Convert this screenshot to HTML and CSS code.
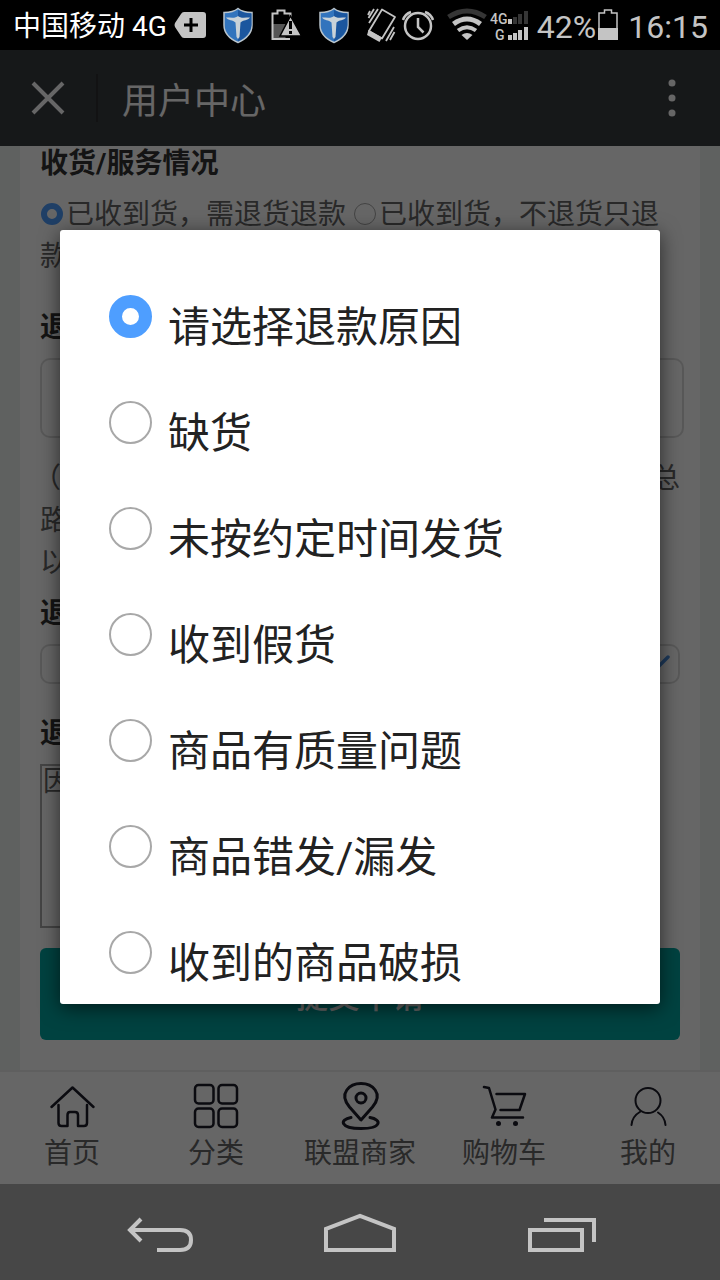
FILE: index.html
```html
<!DOCTYPE html>
<html lang="zh-CN">
<head>
<meta charset="utf-8">
<meta name="viewport" content="width=device-width, initial-scale=1">
<title>用户中心</title>
<link rel="stylesheet" href="styles.css">
</head>
<body>
<svg width="0" height="0" class="defs" aria-hidden="true">
  <symbol id="shield" viewBox="0 0 48 50">
    <path d="M24 8.500C21 11 15 12.500 10 12.500V25C10 33 16 39 24 42.500C32 39 38 33 38 25V12.500C33 12.500 27 11 24 8.500Z" fill="#3274bd" stroke="#b9c4cc" stroke-width="1.500"/>
    <path d="M24 10C28 12.500 33 13.500 37.500 13.500V25C37 32 31.500 38 24 41.500Z" fill="#1b569e"/>
    <path d="M12 17.500C17 17.500 22 18.500 24 16C26 18.500 31 17.500 36 17.500C34 20.500 29 20 26.500 22.500L25.500 37L24 39L22.500 37L21.500 22.500C19 20 14 20.500 12 17.500Z" fill="#c9d2d8"/>
  </symbol>
</svg>
<div class="screen">
  <div class="status">
    <span class="carrier">中国移动 4G</span>
    <svg class="ico-tag" viewBox="0 0 32 50"><path d="M10 12H29Q32 12 32 15V35Q32 38 29 38H10Q8 38 7 36L1 27Q0 25 1 23L7 14Q8 12 10 12Z" fill="#c4c4c4"/><path d="M17 18V32M10 25H24" stroke="#000" stroke-width="3"/></svg>
    <svg class="ico-48 first" viewBox="0 0 48 50"><use href="#shield"/></svg>
    <svg class="ico-48" viewBox="0 0 48 50"><path d="M10.500 24H23.500V39H10.500Z" fill="#555"/><path d="M28 39H10.500V13.500H15.500V10.500H22.500V13.500H28.500V18" fill="none" stroke="#c4c4c4" stroke-width="2"/><path d="M28.500 16L39.500 36H18Z" fill="#c4c4c4" stroke="#000" stroke-width="1.500"/><path d="M28.500 21V29M28.500 31V34" stroke="#000" stroke-width="3"/></svg>
    <svg class="ico-48" viewBox="0 0 48 50"><use href="#shield"/></svg>
    <svg class="ico-40" viewBox="0 0 40 50"><g fill="none" stroke="#c4c4c4" stroke-width="1.800" stroke-linejoin="round"><path d="M24 9.500L37 17L24 38.500L11 31Z"/><path d="M12 11L10 15M16 9L10.500 18M20 9L11 23M36 27L28 41M36.500 32L32 40"/></g><path d="M10.500 30L24 37.500L21.500 42L9 35Z" fill="#c4c4c4"/></svg>
    <svg class="ico-40" viewBox="0 0 40 50"><g fill="none" stroke="#c4c4c4" stroke-width="2.500"><circle cx="20" cy="26" r="13"/><path d="M20 18V27L25.500 32.500M5 20Q7 14 13 12M35 20Q33 14 27 12"/></g></svg>
    <svg class="ico-wifi" viewBox="0 0 48 50"><g fill="none"><path d="M5.500 17Q24 5 42.500 17" stroke="#353535" stroke-width="5"/><g stroke="#c4c4c4" stroke-width="5"><path d="M10.500 24Q24 14 37.500 24"/><path d="M15 30.500Q24 24 33 30.500" stroke-width="4"/></g></g><path d="M18.500 35Q24 31 29.500 35L24 40Z" fill="#c4c4c4"/></svg>
    <svg class="ico-40 signal" viewBox="0 0 40 50"><text x="0" y="24" class="net">4G</text><text x="5" y="40" class="net">G</text><path d="M18 19h4v5h-4ZM18 35h4v5h-4ZM23 33h4v7h-4ZM28 30h4v10h-4ZM34 27h4v13h-4Z" fill="#c4c4c4"/><path d="M23 17h4v7h-4ZM28 14h4v10h-4ZM34 11h4v13h-4Z" fill="#353535"/></svg>
    <span class="percent">42%</span>
    <svg class="ico-battery" viewBox="0 0 24 50"><path d="M3 39V13H8.500V10H15.500V13H21V39Z" fill="none" stroke="#c4c4c4" stroke-width="1.500"/><path d="M2 28H22V40H2Z" fill="#c4c4c4"/></svg>
    <time class="clock">16:15</time>
  </div>

  <div class="app">
    <header class="topbar">
      <button class="icon-btn close" aria-label="关闭"><svg width="36" height="36" viewBox="0 0 36 36"><path d="M3 3L33 33M33 3L3 33" stroke="#fff" stroke-width="4"/></svg></button>
      <h1>用户中心</h1>
      <button class="icon-btn more" aria-label="更多"><svg width="8" height="40" viewBox="0 0 8 40"><g fill="#fff"><circle cx="4" cy="5" r="3.500"/><circle cx="4" cy="20" r="3.500"/><circle cx="4" cy="35" r="3.500"/></g></svg></button>
    </header>

    <main class="content">
      <form class="card">
        <fieldset class="group">
          <legend class="label">收货/服务情况</legend>
          <div class="options"><label><input class="radio small" type="radio" name="received" checked>已收到货，需退货退款</label> <label><input class="radio small" type="radio" name="received">已收到货，不退货只退款</label></div>
        </fieldset>
        <div class="group">
          <label class="label" for="amount">退款金额</label>
          <input class="box amount" id="amount" type="text">
          <p class="note"><span class="split"><span class="paren">（</span><span>总</span></span><span>路</span><span>以</span></p>
        </div>
        <div class="group">
          <label class="label" for="reason">退款原因</label>
          <div class="select-wrap">
            <select class="box" id="reason"><option></option></select>
            <svg class="chevron" width="28" height="20" viewBox="0 0 28 20"><path d="M2 4L14 16L26 4" fill="none" stroke="#4a90e2" stroke-width="3.500" stroke-linecap="round"/></svg>
          </div>
        </div>
        <div class="group detail">
          <label class="label" for="detail">退款说明</label>
          <textarea id="detail">因</textarea>
        </div>
        <button class="submit" type="button">提交申请</button>
      </form>
    </main>

    <nav class="tabs">
      <a href="#home"><svg viewBox="0 0 48 48"><path d="M3.500 25L24.500 5.500L45.500 25M10.500 23V41Q10.500 44 13.500 44H19.500V33Q19.500 30 22 30H27Q30 30 30 33V44H36Q39 44 39 41V23"/></svg>首页</a>
      <a href="#category"><svg viewBox="0 0 48 48"><rect x="3" y="3" width="18.500" height="18.500" rx="3.500"/><rect x="26.500" y="3" width="18.500" height="18.500" rx="3.500"/><rect x="3" y="26.500" width="18.500" height="18.500" rx="3.500"/><rect x="26.500" y="26.500" width="18.500" height="18.500" rx="3.500"/></svg>分类</a>
      <a href="#union"><svg class="pin" viewBox="0 0 48 48"><path d="M25 38L13.500 25C2 11 14 1.500 25 1.500S48 11 36.500 25Z"/><circle cx="25" cy="16" r="5"/><path d="M15 35.500C3 37.500 4 46.500 25 46.500S46 37.500 34 35.500"/></svg>联盟商家</a>
      <a href="#cart"><svg viewBox="0 0 48 48"><path d="M4 5L9 6L15.500 27.500L12 35.500H43M16.500 12H45L39.500 28H20.500"/><circle class="solid" cx="18.500" cy="41.500" r="2.500"/><circle class="solid" cx="35.500" cy="41.500" r="2.500"/></svg>购物车</a>
      <a href="#mine"><svg class="thin" viewBox="0 0 48 48"><circle cx="24" cy="18.500" r="12.500"/><path d="M16.500 29.500Q8 34.500 7.500 43M34 30.500Q41 35 41.500 43"/></svg>我的</a>
    </nav>

    <div class="overlay">
      <div class="dialog" role="dialog" aria-label="请选择退款原因">
        <label class="choice"><input class="radio" type="radio" name="pick" checked><span>请选择退款原因</span></label>
        <label class="choice"><input class="radio" type="radio" name="pick"><span>缺货</span></label>
        <label class="choice"><input class="radio" type="radio" name="pick"><span>未按约定时间发货</span></label>
        <label class="choice"><input class="radio" type="radio" name="pick"><span>收到假货</span></label>
        <label class="choice"><input class="radio" type="radio" name="pick"><span>商品有质量问题</span></label>
        <label class="choice"><input class="radio" type="radio" name="pick"><span>商品错发/漏发</span></label>
        <label class="choice"><input class="radio" type="radio" name="pick"><span>收到的商品破损</span></label>
      </div>
    </div>
  </div>

  <div class="softkeys">
    <button class="icon-btn" aria-label="返回"><svg width="72" height="48" viewBox="0 0 72 48"><path d="M17 11L6 22L17 33M6 22H56Q67 22 67 32T56 42H33"/></svg></button>
    <button class="icon-btn" aria-label="主页"><svg width="72" height="48" viewBox="0 0 72 48"><path d="M2 42V21L36 8L70 21V42Z"/></svg></button>
    <button class="icon-btn" aria-label="最近任务"><svg width="72" height="48" viewBox="0 0 72 48"><path d="M6 22H58V42H6ZM20 12H70V34"/></svg></button>
  </div>
</div>
</body>
</html>
```
FILE: styles.css
```css
* { box-sizing: border-box; }

body {
  margin: 0;
  font-family: Roboto, "Noto Sans CJK SC", sans-serif;
  font-size: 28px;
  color: #666;
}

.defs { position: absolute; }

.screen {
  display: flex;
  flex-direction: column;
  min-height: 100vh;
}

/* status bar */
.status {
  display: flex;
  align-items: center;
  height: 50px;
  padding: 0 12px 0 13px;
  background: #000;
  color: #c4c4c4;
  font-size: 32px;
  line-height: 50px;
  white-space: nowrap;
}
.status svg { height: 50px; flex: none; }
.carrier { padding-top: 3px; font-size: 28px; color: #fff; }
.ico-tag { width: 32px; margin-left: 7px; }
.ico-48 { width: 48px; }
.ico-48.first { margin-left: 8px; }
.ico-40 { width: 40px; }
.ico-wifi { width: 48px; margin-left: 5px; }
.net { font-size: 14px; font-weight: 500; fill: #c4c4c4; }
.signal { margin-left: -1px; }
.percent { margin-left: 7px; padding-top: 3px; }
.ico-battery { width: 24px; }
.clock { margin-left: auto; padding-top: 3px; }

.app {
  position: relative;
  flex: 1;
  display: flex;
  flex-direction: column;
}

.icon-btn {
  display: flex;
  align-items: center;
  justify-content: center;
  padding: 0;
  border: 0;
  background: none;
}

/* page header */
.topbar {
  display: flex;
  align-items: center;
  height: 96px;
  background: #393c40;
  color: #fff;
}
.topbar h1 {
  flex: 1;
  margin: 0;
  padding-left: 24px;
  font-size: 36px;
  font-weight: 400;
}
.close { width: 98px; height: 48px; border-right: 2px solid #2d2f31; }
.more { width: 96px; height: 96px; }

/* refund form */
.content {
  flex: 1;
  padding: 0 20px;
  background: #edf2f0;
}
.card {
  height: 100%;
  padding: 0 20px 30px;
  background: #fff;
}
.group { margin: 0; padding: 0; border: 0; }
.label {
  display: block;
  margin-bottom: 12px;
  padding: 0;
  font-weight: 700;
  line-height: 36px;
  color: #333;
}
.options {
  margin-bottom: 32px;
  line-height: 42px;
}
.radio {
  appearance: none;
  flex: none;
  width: 43px;
  height: 43px;
  margin: 0;
  border: 2px solid #a8a8a8;
  border-radius: 50%;
  background: #fff;
}
.radio:checked { border: 13px solid #4e9eff; }
.radio.small {
  width: 22px;
  height: 22px;
  margin: 0 3px 0 1px;
  border-width: 1px;
  vertical-align: -1px;
}
.radio.small:checked { border-width: 6px; }
.box {
  display: block;
  appearance: none;
  width: 100%;
  height: 40px;
  border: 2px solid #ddd;
  border-radius: 10px;
  background: #fff;
  color: inherit;
  font: inherit;
}
.amount { width: calc(100% + 4px); height: 80px; }
.note {
  margin: 20px 0 12px;
  line-height: 42px;
}
.note > span { display: block; }
.note > .split { display: flex; justify-content: space-between; }
.paren { margin-left: -7px; }
.select-wrap { position: relative; }
.chevron { position: absolute; right: 10px; top: 9px; }
.detail { margin-top: 32px; }
textarea {
  display: block;
  width: 90%;
  height: 164px;
  padding: 0 1px;
  border: 2px solid #aaa;
  background: #fff;
  color: inherit;
  font: inherit;
  line-height: 32px;
  resize: none;
}
.submit {
  display: block;
  width: 100%;
  height: 92px;
  margin-top: 20px;
  border: 0;
  border-radius: 6px;
  background: #00a5a0;
  color: #fff;
  font: inherit;
  font-size: 32px;
  font-weight: 500;
}

/* tab bar */
.tabs {
  display: grid;
  grid-template-columns: repeat(5, 1fr);
  height: 114px;
  padding-top: 10px;
  border-top: 2px solid #eee;
  background: #fff;
}
.tabs a {
  display: flex;
  flex-direction: column;
  align-items: center;
  line-height: 48px;
  color: #666;
  text-decoration: none;
}
.tabs svg {
  width: 48px;
  height: 48px;
  flex: none;
  fill: none;
  stroke: #1c1c28;
  stroke-width: 2.5px;
  stroke-linecap: round;
  stroke-linejoin: round;
}
.tabs .pin { stroke-width: 3px; }
.tabs .thin { stroke-width: 2px; }
.tabs .solid { fill: #1c1c28; stroke: none; }

/* picker dialog */
.overlay {
  position: absolute;
  inset: 0;
  display: flex;
  align-items: center;
  padding: 0 60px;
  background: rgba(0, 0, 0, 0.6);
}
.dialog {
  display: flex;
  flex-direction: column;
  flex: 1;
  gap: 40px;
  padding: 65px 49px 7px;
  border-radius: 3px;
  background: #fff;
  box-shadow: 0 4px 20px rgba(0, 0, 0, 0.6);
}
.choice {
  display: flex;
  align-items: flex-start;
  gap: 16px;
  font-size: 42px;
  line-height: 66px;
  color: #222;
}

/* system keys */
.softkeys {
  display: flex;
  align-items: center;
  justify-content: space-between;
  height: 96px;
  padding: 0 124px;
  background: #474747;
}
.softkeys svg { fill: none; stroke: #c4c4c4; stroke-width: 4px; }
```
